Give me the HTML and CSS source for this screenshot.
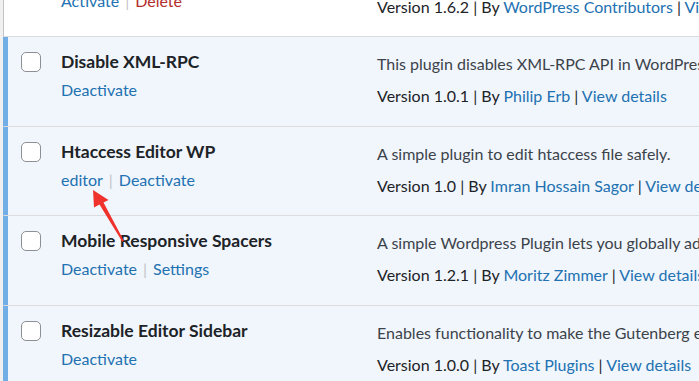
FILE: index.html
```html
<!DOCTYPE html>
<html lang="en">
<head>
    <meta charset="UTF-8">
    <title>Plugins</title>
    <link rel="stylesheet" href="styles.css">
</head>
<body>
    <div class="plugins">
        <div class="plugin-row">
            <div class="check-col"><span class="checkbox"></span></div>
            <div class="plugin-title">
                <strong>Classic Editor</strong>
                <div class="row-actions">
                    <a href="#">Activate</a><span class="sep">|</span><a href="#" class="delete">Delete</a>
                </div>
            </div>
            <div class="plugin-desc">
                <p>Enables the WordPress classic editor and the old-style Edit Post screen with TinyMCE, Meta Boxes, etc.</p>
                <div class="plugin-meta">Version 1.6.2 | By <a href="#">WordPress Contributors</a> | <a href="#">View details</a></div>
            </div>
        </div>

        <div class="plugin-row active">
            <div class="check-col"><span class="checkbox"></span></div>
            <div class="plugin-title">
                <strong>Disable XML-RPC</strong>
                <div class="row-actions">
                    <a href="#">Deactivate</a>
                </div>
            </div>
            <div class="plugin-desc">
                <p>This plugin disables XML-RPC API in WordPress 3.5+, which is enabled by default.</p>
                <div class="plugin-meta">Version 1.0.1 | By <a href="#">Philip Erb</a> | <a href="#">View details</a></div>
            </div>
        </div>

        <div class="plugin-row active">
            <div class="check-col"><span class="checkbox"></span></div>
            <div class="plugin-title">
                <strong>Htaccess Editor WP</strong>
                <div class="row-actions">
                    <a href="#">editor</a><span class="sep">|</span><a href="#">Deactivate</a>
                </div>
            </div>
            <div class="plugin-desc">
                <p>A simple plugin to edit htaccess file safely.</p>
                <div class="plugin-meta">Version 1.0 | By <a href="#">Imran Hossain Sagor</a> | <a href="#">View details</a></div>
            </div>
        </div>

        <div class="plugin-row active">
            <div class="check-col"><span class="checkbox"></span></div>
            <div class="plugin-title">
                <strong>Mobile Responsive Spacers</strong>
                <div class="row-actions">
                    <a href="#">Deactivate</a><span class="sep">|</span><a href="#">Settings</a>
                </div>
            </div>
            <div class="plugin-desc">
                <p>A simple Wordpress Plugin lets you globally adjust spacer blocks for mobile devices.</p>
                <div class="plugin-meta">Version 1.2.1 | By <a href="#">Moritz Zimmer</a> | <a href="#">View details</a></div>
            </div>
        </div>

        <div class="plugin-row active">
            <div class="check-col"><span class="checkbox"></span></div>
            <div class="plugin-title">
                <strong>Resizable Editor Sidebar</strong>
                <div class="row-actions">
                    <a href="#">Deactivate</a>
                </div>
            </div>
            <div class="plugin-desc">
                <p>Enables functionality to make the Gutenberg editor sidebar resizable.</p>
                <div class="plugin-meta">Version 1.0.0 | By <a href="#">Toast Plugins</a> | <a href="#">View details</a></div>
            </div>
        </div>
    </div>

    <!-- annotation arrow pointing at the "editor" link -->
    <svg class="arrow" width="699" height="381" viewBox="0 0 699 381">
        <polygon points="93,190 108.5,200 103.5,202.5 124,241 122.3,241.8 99.5,204.5 94,207.5" fill="#f0322c"/>
    </svg>
</body>
</html>
```

FILE: styles.css
```css
body {
    margin: 0;
    background-color: #f0f0f1;
    font-family: Lato, "Liberation Sans", sans-serif;
    color: #3c434a;
    overflow: hidden;
    height: 381px;
}

a {
    color: #2271b1;
    text-decoration: none;
}

.plugins {
    margin-left: 3px;
    margin-top: -52px;
    width: 1000px;
}

.plugin-row {
    display: grid;
    grid-template-columns: 57px 316px 1fr;
    height: 88.4px;
    background: #fff;
    border-left: 1px solid #c3c4c7;
    border-bottom: 1px solid #dcdcde;
}

.plugin-row.active {
    background: #f0f6fc;
    border-left-color: #72aee6;
    box-shadow: inset 4px 0 0 #72aee6;
}

.check-col {
    padding-top: 15px;
    padding-left: 17px;
}

.checkbox {
    display: block;
    width: 18px;
    height: 18px;
    border: 1px solid #8c8f94;
    border-radius: 5px;
    background: #fff;
}

.plugin-title {
    padding-top: 12px;
}

.plugin-title strong {
    display: block;
    font-size: 17.5px;
    font-weight: 700;
    line-height: 26px;
    color: #1d2327;
}

.row-actions {
    margin-top: 1px;
    font-size: 16px;
    line-height: 27px;
}

.row-actions .sep {
    color: #c3c4c7;
    margin: 0 6px;
}

.row-actions .delete {
    color: #b32d2e;
}

.plugin-desc {
    padding-top: 15px;
    font-size: 16px;
    white-space: nowrap;
}

.plugin-desc p {
    margin: 0;
    line-height: 24px;
}

.plugin-meta {
    margin-top: 8px;
    line-height: 24px;
    color: #1d2327;
}

.arrow {
    position: absolute;
    left: 0;
    top: 0;
}
```
